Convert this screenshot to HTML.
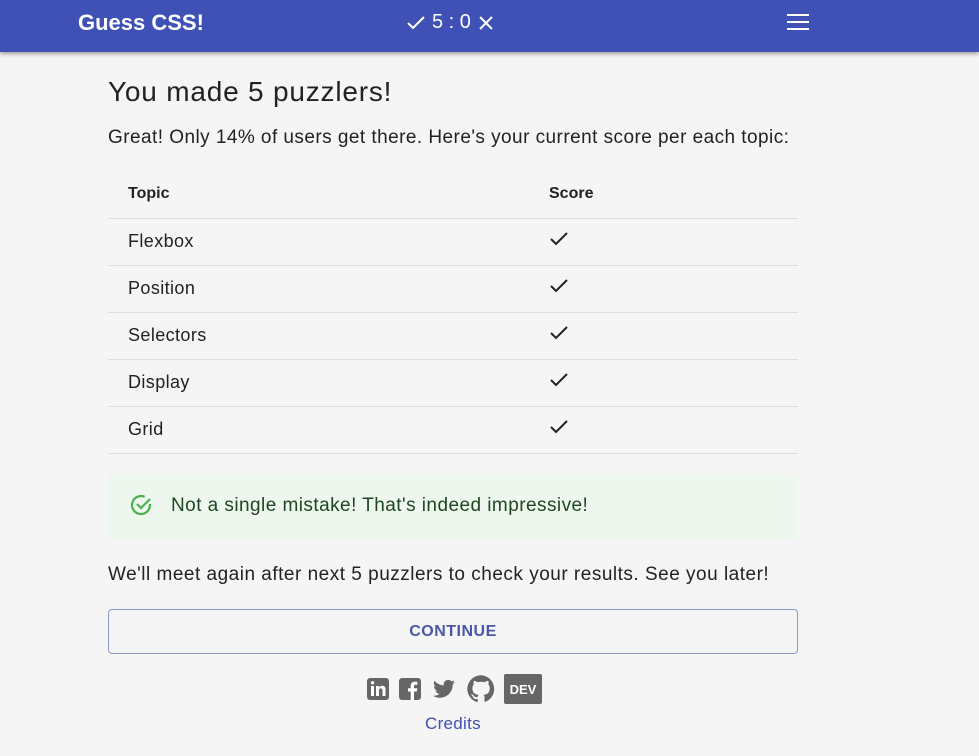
<!DOCTYPE html>
<html><head><style>
*{box-sizing:border-box;margin:0;padding:0}
body{width:979px;height:756px;background:#f5f5f5;font-family:"Liberation Sans",sans-serif;color:#222;overflow:hidden;position:relative}
.bar{position:absolute;left:0;top:0;width:979px;height:52px;background:#3f51b5;box-shadow:0 2px 4px rgba(0,0,0,.35);color:#fff}
.logo{position:absolute;left:78px;top:10px;font-size:22px;font-weight:bold;letter-spacing:0px}
.score{position:absolute;left:406px;top:11px;font-size:20px;display:flex;align-items:center;gap:6px}
.menu{position:absolute;left:787px;top:14px;width:22px}
.menu i{display:block;height:2px;background:#fff;margin-bottom:5px}
.main{position:absolute;left:108px;top:0;width:690px}
h1{position:absolute;top:76px;font-size:28px;font-weight:normal;white-space:nowrap;letter-spacing:.8px}
.p1{position:absolute;top:127px;font-size:19px;white-space:nowrap;letter-spacing:.45px}
table{position:absolute;top:171px;width:690px;border-collapse:collapse;font-size:18px;table-layout:fixed;letter-spacing:.4px}
td,th{height:47px;border-bottom:1px solid #ddd;text-align:left;padding-left:20px}
th{font-size:16px;font-weight:bold;height:47px;letter-spacing:0}
col.a{width:421px}
.ok{position:absolute;top:474px;width:690px;height:65px;background:#edf7ed;color:#1e4620;font-size:19px}
.ok span{position:absolute;left:63px;top:21px;white-space:nowrap;letter-spacing:.45px}
.p2{position:absolute;top:564px;font-size:19px;white-space:nowrap;letter-spacing:.5px}
.btn{position:absolute;top:609px;width:690px;height:45px;border:1px solid #8c97d4;border-radius:4px;color:#3f51b5;font-size:16px;text-align:center;line-height:43px;letter-spacing:.5px;font-weight:bold;color:#4a57a8}
.soc{position:absolute;left:366px;top:674px;display:flex;gap:8px;align-items:center}
.cred{position:absolute;left:425px;top:714px;color:#3f51b5;font-size:17px;letter-spacing:.3px}
</style></head><body>
<div class="bar"><div class="logo">Guess CSS!</div>
<div class="score"><svg width="20" height="20" viewBox="0 0 20 20"><path d="M2 10l5 5L18 4" fill="none" stroke="#fff" stroke-width="2"/></svg><span>5 : 0</span><svg width="18" height="18" viewBox="0 0 18 18"><path d="M3 3l12 12M15 3L3 15" stroke="#fff" stroke-width="2"/></svg></div>
<div class="menu"><i></i><i></i><i></i></div></div>
<div class="main">
<h1>You made 5 puzzlers!</h1>
<div class="p1">Great! Only 14% of users get there. Here's your current score per each topic:</div>
<table><colgroup><col class="a"><col></colgroup><tr><th>Topic</th><th>Score</th></tr>
<tr><td>Flexbox</td><td class="c"><svg width="20" height="16" viewBox="0 0 20 16"><path d="M2 8l5 5L18 2" fill="none" stroke="#222" stroke-width="2"/></svg></td></tr>
<tr><td>Position</td><td class="c"><svg width="20" height="16" viewBox="0 0 20 16"><path d="M2 8l5 5L18 2" fill="none" stroke="#222" stroke-width="2"/></svg></td></tr>
<tr><td>Selectors</td><td class="c"><svg width="20" height="16" viewBox="0 0 20 16"><path d="M2 8l5 5L18 2" fill="none" stroke="#222" stroke-width="2"/></svg></td></tr>
<tr><td>Display</td><td class="c"><svg width="20" height="16" viewBox="0 0 20 16"><path d="M2 8l5 5L18 2" fill="none" stroke="#222" stroke-width="2"/></svg></td></tr>
<tr><td>Grid</td><td class="c"><svg width="20" height="16" viewBox="0 0 20 16"><path d="M2 8l5 5L18 2" fill="none" stroke="#222" stroke-width="2"/></svg></td></tr></table>
<div class="ok"><svg style="position:absolute;left:21px;top:19px" width="24" height="24" viewBox="0 0 24 24"><path d="M21 11v1a9 9 0 1 1-5.3-8.2" fill="none" stroke="#4caf50" stroke-width="2.2"/><path d="M8 11l4 4 9-9" fill="none" stroke="#4caf50" stroke-width="2.2"/></svg><span>Not a single mistake! That's indeed impressive!</span></div>
<div class="p2">We'll meet again after next 5 puzzlers to check your results. See you later!</div>
<div class="btn">CONTINUE</div>
</div>
<div class="soc">
<svg width="24" height="24" viewBox="0 0 24 24"><rect x="1" y="1" width="22" height="22" rx="3" fill="#666"/><rect x="5" y="9" width="3" height="10" fill="#fff"/><circle cx="6.5" cy="5.8" r="1.7" fill="#fff"/><path d="M10 9h3v1.5c.8-1.3 2-1.8 3.3-1.8 2.3 0 3.2 1.5 3.2 4V19h-3v-5.5c0-1.3-.4-2.1-1.6-2.1s-1.9.9-1.9 2.1V19h-3z" fill="#fff"/></svg>
<svg width="24" height="24" viewBox="0 0 24 24"><rect x="1" y="1" width="22" height="22" rx="3" fill="#666"/><path d="M16 23v-8.5h2.8l.4-3.2H16V9.3c0-.9.3-1.6 1.6-1.6h1.7V4.9c-.3 0-1.3-.1-2.5-.1-2.5 0-4.1 1.5-4.1 4.2v2.3H10v3.2h2.7V23z" fill="#fff"/></svg>
<svg width="28" height="24" viewBox="0 0 24 24"><path d="M23 5c-.8.4-1.7.6-2.6.7.9-.6 1.6-1.4 2-2.5-.9.5-1.9.9-2.9 1.1a4.5 4.5 0 0 0-7.7 4.1C8 8.2 4.7 6.4 2.5 3.7c-1.2 2-.6 4.6 1.4 6-.7 0-1.400-.2-2-.6 0 2.2 1.5 4.1 3.6 4.5-.7.2-1.4.2-2 .1.6 1.8 2.3 3.1 4.2 3.1A9 9 0 0 1 1 18.7 12.8 12.8 0 0 0 20.7 7.3c.9-.6 1.7-1.4 2.300-2.3z" fill="#666"/></svg>
<svg width="30" height="30" viewBox="0 0 24 24"><path d="M12 1a11 11 0 0 0-3.5 21.4c.6.1.8-.2.8-.5v-2c-3.1.7-3.7-1.4-3.7-1.4-.5-1.3-1.2-1.6-1.2-1.6-1-.7.1-.7.1-.7 1.1.1 1.7 1.1 1.7 1.1 1 1.7 2.6 1.2 3.2.9.1-.7.4-1.2.7-1.5-2.4-.3-5-1.2-5-5.4 0-1.2.4-2.2 1.1-2.9-.1-.3-.5-1.4.1-2.9 0 0 .9-.3 3 1.1a10.5 10.5 0 0 1 5.5 0c2.1-1.4 3-1.1 3-1.1.6 1.5.2 2.6.1 2.9.7.8 1.1 1.7 1.1 2.9 0 4.2-2.6 5.1-5 5.4.4.3.8 1 .8 2v3c0 .3.2.6.8.5A11 11 0 0 0 12 1z" fill="#666"/></svg>
<svg width="38" height="30" viewBox="0 0 38 30"><rect width="38" height="30" rx="2" fill="#666"/><text x="19" y="20" text-anchor="middle" fill="#fff" font-family="Liberation Sans" font-weight="bold" font-size="13">DEV</text></svg>
</div>
<div class="cred">Credits</div>
</body></html>
